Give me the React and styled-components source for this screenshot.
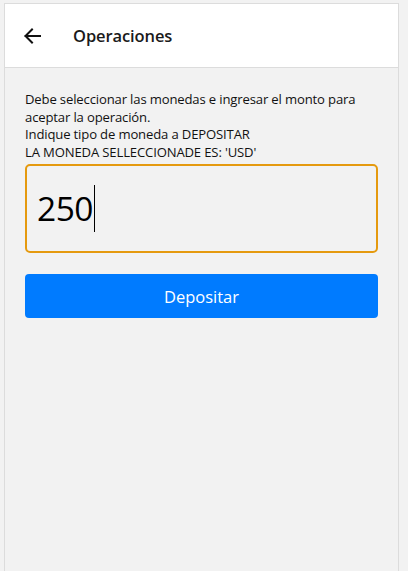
import React from "react";
import styled, { createGlobalStyle } from "styled-components";

const Global = createGlobalStyle`
  html, body { margin: 0; padding: 0; background: #f2f2f2; }
  body { font-family: "Open Sans", "Noto Sans", sans-serif; }
`;

const Page = styled.div`
  padding: 3px 9px 0 4px;
  height: 571px;
  box-sizing: border-box;
`;

const Frame = styled.div`
  height: 100%;
  box-sizing: border-box;
  border: 1px solid #dcdcdc;
  border-bottom: none;
  background: #f2f2f2;
  display: flex;
  flex-direction: column;
`;

const Header = styled.header`
  flex: none;
  height: 63px;
  background: #fff;
  border-bottom: 1px solid #dcdcdc;
  display: flex;
  align-items: center;
  padding-left: 18px;
  gap: 32px;
`;

const BackButton = styled.button`
  border: none;
  background: none;
  padding: 0;
  width: 18px;
  height: 18px;
  display: flex;
  color: #111;
`;

const Title = styled.h1`
  margin: 0;
  font-size: 16.5px;
  font-weight: 600;
  color: #1a1a1a;
  letter-spacing: -0.1px;
`;

const Content = styled.main`
  padding: 23px 20px 0 20px;
  display: flex;
  flex-direction: column;
`;

const Info = styled.p`
  margin: 0;
  font-size: 13.1px;
  line-height: 17.6px;
  color: #111;
  letter-spacing: -0.15px;
`;

const AmountBox = styled.div`
  flex: none;
  margin-top: 3px;
  height: 89px;
  box-sizing: border-box;
  border: 2px solid #e59a0f;
  border-radius: 5px;
  display: flex;
  align-items: center;
  padding-left: 10px;
`;

const Amount = styled.span`
  font-size: 33.5px;
  color: #000;
  letter-spacing: -0.5px;
  line-height: 1;
`;

const Caret = styled.span`
  display: inline-block;
  width: 1px;
  height: 47px;
  background: #000;
  margin-left: 1px;
`;

const PrimaryButton = styled.button`
  flex: none;
  margin-top: 21px;
  height: 44px;
  border: none;
  border-radius: 4px;
  background: #007bff;
  color: #fff;
  font-family: inherit;
  font-size: 16.5px;
  cursor: pointer;
`;

export default function App() {
  return (
    <>
      <Global />
      <Page>
        <Frame>
          <Header>
            <BackButton aria-label="Volver">
              <svg width="18" height="18" viewBox="0 0 18 18" fill="none" stroke="currentColor" strokeWidth="2" strokeLinecap="square">
                <path d="M17 9H2.5M9 2.5L2.5 9L9 15.5" />
              </svg>
            </BackButton>
            <Title>Operaciones</Title>
          </Header>
          <Content>
            <Info>
              Debe seleccionar las monedas e ingresar el monto para aceptar la operación.
              <br />
              Indique tipo de moneda a DEPOSITAR
              <br />
              LA MONEDA SELLECCIONADE ES: 'USD'
            </Info>
            <AmountBox>
              <Amount>250</Amount>
              <Caret />
            </AmountBox>
            <PrimaryButton>Depositar</PrimaryButton>
          </Content>
        </Frame>
      </Page>
    </>
  );
}
